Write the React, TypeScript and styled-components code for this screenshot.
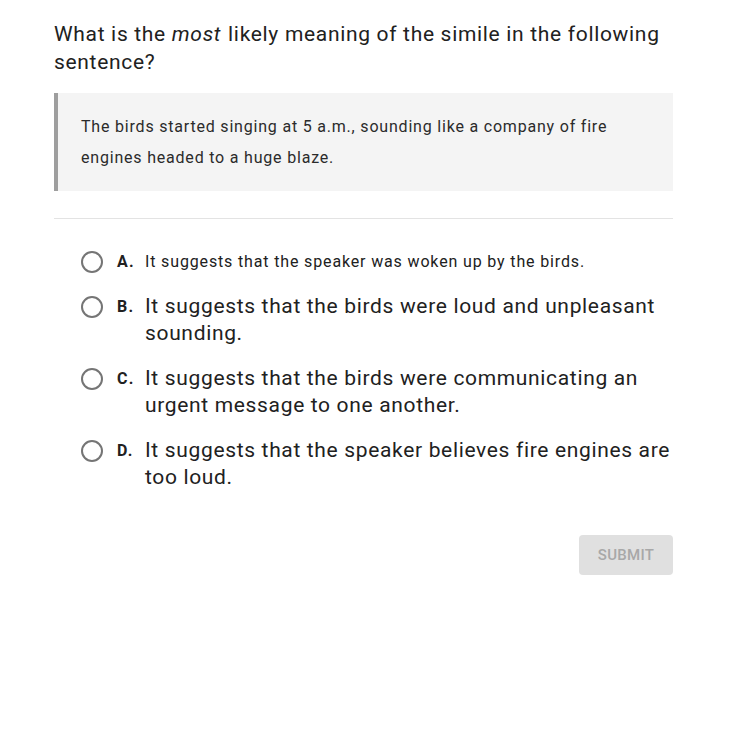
import React from 'react';
import styled, { createGlobalStyle } from 'styled-components';

const GlobalStyle = createGlobalStyle`
    body {
        margin: 0;
        background: #ffffff;
        font-family: Roboto, 'Liberation Sans', Arial, sans-serif;
        color: #212121;
    }
`;

const Page = styled.div`
    width: 619px;
    padding: 20px 0 0 54px;
`;

const Question = styled.h1`
    margin: 0;
    font-size: 21px;
    line-height: 28px;
    font-weight: 400;
    letter-spacing: 0.68px;
    color: #212121;

    em {
        font-style: italic;
        padding-right: 1px;
    }
`;

const Quote = styled.blockquote`
    margin: 17px 0 0;
    padding: 18px 23px 18px 23px;
    border-left: 4px solid #9e9e9e;
    background: #f4f4f4;
    font-size: 16px;
    line-height: 31px;
    letter-spacing: 0.8px;
    color: #2b2b2b;
`;

const Divider = styled.hr`
    margin: 27px 0 0;
    border: none;
    border-top: 1px solid #e3e3e3;
`;

const Options = styled.div`
    display: flex;
    flex-direction: column;
    gap: 18px;
    margin-top: 29px;
    padding-left: 27px;
`;

const Option = styled.label`
    display: flex;
    align-items: flex-start;
    cursor: pointer;
`;

const Radio = styled.span`
    flex: none;
    width: 22px;
    height: 22px;
    margin-top: 3px;
    box-sizing: border-box;
    border: 2px solid #757575;
    border-radius: 50%;
`;

const Letter = styled.span`
    flex: none;
    width: 28px;
    margin-left: 14px;
    font-weight: 700;
    font-size: 16px;
    letter-spacing: 1.2px;
    line-height: 27px;
    color: #212121;
`;

const Text = styled.span<{ $small?: boolean }>`
    font-size: ${(p) => (p.$small ? '16px' : '21px')};
    letter-spacing: ${(p) => (p.$small ? '0.85px' : '0.66px')};
    line-height: 27px;
    color: #212121;
`;

const Footer = styled.div`
    display: flex;
    justify-content: flex-end;
    margin-top: 44px;
`;

const SubmitButton = styled.button`
    width: 94px;
    height: 40px;
    border: none;
    border-radius: 4px;
    background: #e0e0e0;
    color: #a8a8a8;
    font-family: Roboto, 'Liberation Sans', Arial, sans-serif;
    font-size: 15px;
    font-weight: 500;
    letter-spacing: 0.3px;
    text-transform: uppercase;
`;

const choices = [
    { letter: 'A.', text: 'It suggests that the speaker was woken up by the birds.', small: true },
    { letter: 'B.', text: 'It suggests that the birds were loud and unpleasant sounding.' },
    { letter: 'C.', text: 'It suggests that the birds were communicating an urgent message to one another.' },
    { letter: 'D.', text: 'It suggests that the speaker believes fire engines are too loud.' },
];

const App: React.FC = () => {
    return (
        <>
            <GlobalStyle />
            <Page>
                <Question>
                    What is the <em>most</em> likely meaning of the simile in the following sentence?
                </Question>
                <Quote>
                    The birds started singing at 5 a.m., sounding like a company of fire engines headed to a huge blaze.
                </Quote>
                <Divider />
                <Options>
                    {choices.map((item) => (
                        <Option key={item.letter}>
                            <Radio />
                            <Letter>{item.letter}</Letter>
                            <Text $small={item.small}>{item.text}</Text>
                        </Option>
                    ))}
                </Options>
                <Footer>
                    <SubmitButton>Submit</SubmitButton>
                </Footer>
            </Page>
        </>
    );
};

export default App;
